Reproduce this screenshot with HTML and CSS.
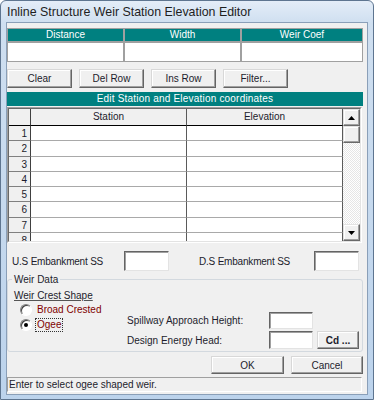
FILE: index.html
```html
<!DOCTYPE html>
<html lang="en">
<head>
  <meta charset="UTF-8">
  <meta name="viewport" content="width=device-width, initial-scale=1.0">
  <title>Inline Structure Weir Station Elevation Editor</title>
  <link rel="stylesheet" href="styles.css">
</head>
<body>
  <div class="window">
    <div class="title-bar">Inline Structure Weir Station Elevation Editor</div>
    <div class="client">
      <div class="weir-table">
        <div class="weir-head">Distance</div>
        <div class="weir-head">Width</div>
        <div class="weir-head">Weir Coef</div>
        <div class="weir-cell"></div>
        <div class="weir-cell"></div>
        <div class="weir-cell"></div>
      </div>

      <div class="tool-row">
        <button class="btn tool-btn">Clear</button>
        <button class="btn tool-btn">Del Row</button>
        <button class="btn tool-btn">Ins Row</button>
        <button class="btn tool-btn">Filter...</button>
      </div>

      <div class="grid-title">Edit Station and Elevation coordinates</div>
      <div class="grid">
        <div class="grid-inner">
          <div class="grid-table">
            <div class="grow ghead">
              <div class="rh"></div>
              <div class="gc">Station</div>
              <div class="gc">Elevation</div>
            </div>
            <div class="grow"><div class="rh">1</div><div class="gc"></div><div class="gc"></div></div>
            <div class="grow"><div class="rh">2</div><div class="gc"></div><div class="gc"></div></div>
            <div class="grow"><div class="rh">3</div><div class="gc"></div><div class="gc"></div></div>
            <div class="grow"><div class="rh">4</div><div class="gc"></div><div class="gc"></div></div>
            <div class="grow"><div class="rh">5</div><div class="gc"></div><div class="gc"></div></div>
            <div class="grow"><div class="rh">6</div><div class="gc"></div><div class="gc"></div></div>
            <div class="grow"><div class="rh">7</div><div class="gc"></div><div class="gc"></div></div>
            <div class="grow"><div class="rh">8</div><div class="gc"></div><div class="gc"></div></div>
          </div>
          <div class="vscroll">
            <div class="sb-btn">
              <svg width="7" height="4" viewBox="0 0 7 4"><polygon points="3.5,0 7,4 0,4" fill="#000"/></svg>
            </div>
            <div class="sb-thumb"></div>
            <div class="sb-track"></div>
            <div class="sb-btn">
              <svg width="7" height="4" viewBox="0 0 7 4"><polygon points="0,0 7,0 3.5,4" fill="#000"/></svg>
            </div>
          </div>
        </div>
      </div>

      <div class="emb-row">
        <span class="emb-label">U.S Embankment SS</span>
        <div class="field emb-field"></div>
        <span class="emb-label emb-label-ds">D.S Embankment SS</span>
        <div class="field emb-field"></div>
      </div>

      <fieldset class="weir-data">
        <legend>Weir Data</legend>
        <div class="crest">
          <div class="crest-title">Weir Crest Shape</div>
          <div class="radio-row">
            <span class="radio"></span>
            <span class="radio-text">Broad Crested</span>
          </div>
          <div class="radio-row">
            <span class="radio checked"></span>
            <span class="radio-text focus">Ogee</span>
          </div>
        </div>
        <div class="spill">
          <span class="spill-label">Spillway Approach Height:</span>
          <div class="field"></div>
          <span></span>
          <span class="spill-label">Design Energy Head:</span>
          <div class="field"></div>
          <button class="btn cd-btn">Cd ...</button>
        </div>
      </fieldset>

      <div class="ok-row">
        <button class="btn ok-btn">OK</button>
        <button class="btn cancel-btn">Cancel</button>
      </div>

      <div class="status">Enter to select ogee shaped weir.</div>
    </div>
  </div>
</body>
</html>
```

FILE: styles.css
```css
* {
  box-sizing: border-box;
}
body {
  margin: 0;
  font-family: "Liberation Sans", Arial, sans-serif;
  font-size: 10px;
  color: #1c1c2c;
  background: #fff;
}
.window {
  width: 374px;
  height: 400px;
  display: flex;
  flex-direction: column;
  border: 1px solid #5e7590;
  border-radius: 6px 6px 0 0;
  background: linear-gradient(#e4edf8, #cfdff0 22px, #bcd3ec);
}
.title-bar {
  height: 21px;
  line-height: 22px;
  padding-left: 6px;
  font-size: 12.4px;
  color: #1e1e1e;
}
.client {
  flex: 1;
  margin: 0 5px 4px 5px;
  border: 1px solid #8a9fb8;
  background: #f0f0f0;
  padding: 5px 4px 1px 0;
  display: flex;
  flex-direction: column;
}

/* top weir table */
.weir-table {
  display: grid;
  grid-template-columns: 115px 115px 1fr;
  grid-template-rows: 12px 18px;
  gap: 2px;
  padding: 1px;
  background: #a0a0a0;
}
.weir-head {
  background: #008080;
  color: #fff;
  text-align: center;
  line-height: 12px;
}
.weir-cell {
  background: #fff;
}

/* buttons */
.btn {
  font-family: inherit;
  font-size: 10px;
  color: #1c1c2c;
  background: #f0f0f0;
  border: 1px solid;
  border-color: #d8d8d8 #646464 #646464 #d8d8d8;
  box-shadow: inset -1px -1px #a0a0a0, inset 1px 1px #fff;
  padding: 0;
}
.tool-row {
  display: flex;
  gap: 7px;
  margin-top: 7px;
}
.tool-btn {
  width: 65px;
  height: 19px;
}

/* station / elevation grid */
.grid-title {
  margin-top: 4px;
  height: 14px;
  line-height: 14px;
  background: #008080;
  color: #fff;
  text-align: center;
  letter-spacing: 0.2px;
}
.grid {
  margin-top: 1px;
  width: 355px;
  height: 136px;
  border: 1px solid;
  border-color: #a0a0a0 #fff #fff #a0a0a0;
}
.grid-inner {
  height: 100%;
  display: flex;
  border: 1px solid;
  border-color: #696969 #e3e3e3 #e3e3e3 #696969;
}
.grid-table {
  width: 334px;
  overflow: hidden;
}
.grow {
  display: flex;
  height: 15.3px;
}
.rh {
  width: 22px;
  background: #f0f0f0;
  border-right: 1px solid #404040;
  border-bottom: 1px solid #808080;
  text-align: right;
  padding-right: 3px;
  line-height: 15px;
}
.gc {
  width: 156px;
  background: #fff;
  border-right: 1px solid #5a5a5a;
  border-bottom: 1px solid #a9a9a9;
}
.ghead {
  height: 17px;
}
.ghead .rh,
.ghead .gc {
  background: #f0f0f0;
  border-bottom: 1px solid #000;
  text-align: center;
  line-height: 16px;
}
.vscroll {
  width: 17px;
  display: flex;
  flex-direction: column;
}
.sb-btn,
.sb-thumb {
  height: 17px;
  background: #f0f0f0;
  border: 1px solid;
  border-color: #e3e3e3 #696969 #696969 #e3e3e3;
  box-shadow: inset -1px -1px #a0a0a0, inset 1px 1px #fff;
  display: flex;
  align-items: center;
  justify-content: center;
}
.sb-track {
  flex: 1;
  background: repeating-conic-gradient(#fff 0 25%, #e6e6e6 0 50%) 0 0 / 2px 2px;
}

/* embankment */
.field {
  background: #fff;
  border: 1px solid;
  border-color: #646464 #e3e3e3 #e3e3e3 #646464;
  box-shadow: inset 1px 1px #a0a0a0;
}
.emb-row {
  display: flex;
  align-items: center;
  margin-top: 8px;
  height: 20px;
}
.emb-label {
  width: 117px;
  padding-left: 5px;
  letter-spacing: -0.2px;
}
.emb-label-ds {
  width: 115px;
  margin-left: 30px;
  padding-left: 0;
}
.emb-field {
  width: 45px;
  height: 20px;
}

/* weir data group */
.weir-data {
  display: flex;
  align-items: flex-start;
  margin: 2px 1px 0 0;
  padding: 0 3px 2px 4px;
  border: 1px solid #d3d9df;
  border-radius: 3px;
}
.weir-data legend {
  padding: 0 2px;
  line-height: 13px;
}
.crest {
  width: 113px;
  margin: 3px 0 0 2px;
}
.crest-title {
  line-height: 13px;
  text-decoration: underline;
  text-decoration-color: #555;
}
.radio-row {
  display: flex;
  align-items: center;
  height: 15px;
}
.radio {
  width: 12px;
  height: 12px;
  margin: 0 3px 0 6px;
  border-radius: 50%;
  border: 1px solid;
  border-color: #808080 #fff #fff #808080;
  background: #fff;
  box-shadow: inset 1px 1px #404040;
  display: flex;
  align-items: center;
  justify-content: center;
}
.radio.checked::after {
  content: "";
  width: 4px;
  height: 4px;
  border-radius: 50%;
  background: #000;
}
.radio-text {
  color: #800000;
  padding: 0 1px;
  border: 1px dotted transparent;
  line-height: 12px;
}
.radio-text.focus {
  border-color: #333;
}
.spill {
  display: grid;
  grid-template-columns: 138px 44px 42px;
  grid-template-rows: 17px 18px;
  column-gap: 4px;
  row-gap: 2px;
  margin-top: 26px;
  align-items: center;
}
.spill .field {
  height: 100%;
}
.cd-btn {
  height: 18px;
  font-weight: bold;
}

/* bottom */
.ok-row {
  display: flex;
  justify-content: flex-end;
  gap: 7px;
  margin-top: 4px;
}
.ok-btn {
  width: 73px;
  height: 18px;
}
.cancel-btn {
  width: 72px;
  height: 18px;
}
.status {
  margin-top: 3px;
  width: 355px;
  height: 15px;
  line-height: 13px;
  padding-left: 1px;
  border: 1px solid;
  border-color: #a0a0a0 #fff #fff #a0a0a0;
}
```
